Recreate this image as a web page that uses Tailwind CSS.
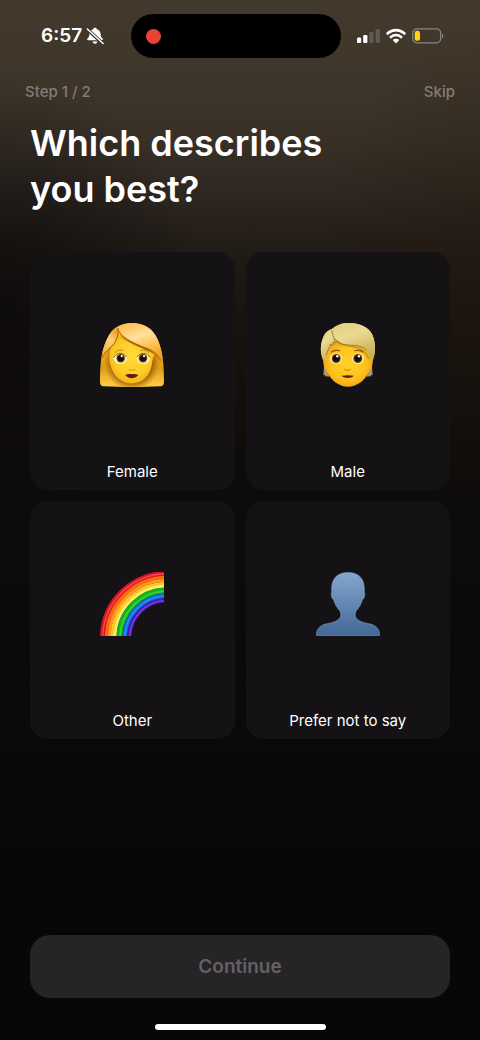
<!DOCTYPE html>
<html lang="en">
<head>
  <meta charset="UTF-8" />
  <meta name="viewport" content="width=device-width, initial-scale=1.0"/>
  <title>Onboarding - Which describes you best?</title>
  <script src="https://cdn.jsdelivr.net/npm/@tailwindcss/browser@4"></script>
</head>
<body class="bg-[#080609] font-['Inter',sans-serif] text-white">
  <div class="flex min-h-screen flex-col bg-[radial-gradient(ellipse_200px_230px_at_0%_300px,#080709a6,#08070900),radial-gradient(ellipse_160px_240px_at_100%_270px,#24180c70,#24180c00),linear-gradient(to_bottom,#43392c_0px,#3e352a_90px,#383026_140px,#2e2721_195px,#221c17_245px,#17130e_320px,#0e0c0a_460px,#0b0a0a_700px,#080609_850px)]">

    <!-- Status bar -->
    <div class="flex h-[58px] items-center pt-[14px] pr-9 pl-[41px]">
      <div class="flex w-[90px] shrink-0 items-center gap-1">
        <span class="text-[19px] leading-6 font-semibold">6:57</span>
        <svg class="size-[18px]" viewBox="0 0 18 18" aria-hidden="true">
          <path fill="#fff" d="M9 .8c1 0 1.700.6 1.800 1.400 2.500.7 3.700 2.500 3.800 4.800.1 2.600.8 3.500 2 4.600.6.600.3 1.600-.7 1.600H2.100c-1 0-1.300-1-.7-1.600 1.200-1.100 1.900-2 2-4.600.1-2.300 1.300-4.100 3.800-4.800C7.300 1.400 8 .8 9 .8zM6.600 14.500h4.800c-.2 1.300-1.100 2.200-2.400 2.200s-2.200-.9-2.400-2.200z"/>
          <path d="M1 2l15.800 14.500" stroke="#3f362a" stroke-width="3.400"/>
          <path d="M1.300 2l15.800 14.500" stroke="#fff" stroke-width="1.400" stroke-linecap="round"/>
        </svg>
      </div>
      <div class="flex h-11 flex-1 items-center rounded-full bg-black pl-[15px]">
        <span class="size-[15px] rounded-full bg-[#e94335]"></span>
      </div>
      <div class="ml-4 flex items-center gap-[6px]">
        <svg class="h-4 w-[23px]" viewBox="0 0 23 16" aria-hidden="true">
          <rect x="0" y="9.500" width="4.200" height="5.500" rx="1.200" fill="#fff"/>
          <rect x="6.200" y="7" width="4.200" height="8" rx="1.200" fill="#fff"/>
          <rect x="12.400" y="4" width="4.200" height="11" rx="1.200" fill="#fff" fill-opacity=".18"/>
          <rect x="18.600" y="1" width="4.200" height="14" rx="1.200" fill="#fff" fill-opacity=".18"/>
        </svg>
        <svg class="h-4 w-5" viewBox="0 0 20 16" aria-hidden="true">
          <path d="M1.800 5.300a12 12 0 0 1 16.400 0" fill="none" stroke="#fff" stroke-width="2.700" stroke-linecap="square"/>
          <path d="M5 8.900a7.400 7.400 0 0 1 10 0" fill="none" stroke="#fff" stroke-width="2.600" stroke-linecap="square"/>
          <path fill="#fff" d="M10 15.400L6.700 12.100a4.700 4.700 0 0 1 6.600 0z"/>
        </svg>
        <svg class="h-4 w-8" viewBox="0 0 32 16" aria-hidden="true">
          <rect x=".7" y=".8" width="28" height="14" rx="4.300" fill="none" stroke="#fff" stroke-opacity=".4" stroke-width="1.200"/>
          <rect x="2.700" y="2.800" width="5.300" height="10" rx="2.200" fill="#ffd60a"/>
          <path d="M30.200 5.500c1.400.7 1.400 4 0 4.700z" fill="#fff" fill-opacity=".5"/>
        </svg>
      </div>
    </div>

    <header class="mt-6 flex items-center justify-between px-[25px] text-[15px] leading-5 font-medium text-[#837c76]">
      <span>Step 1 / 2</span>
      <a href="#skip">Skip</a>
    </header>

    <form class="flex flex-1 flex-col px-[30px] pt-[18px]">
      <h1 id="question" class="text-4xl leading-[46px] font-semibold">Which describes<br/>you best?</h1>

      <div role="radiogroup" aria-labelledby="question" class="mt-10 grid grid-cols-2 gap-[11px]">
        <label class="relative flex h-[238px] flex-col items-center gap-1 rounded-[18px] bg-[#141215] pb-2 has-checked:ring-2 has-checked:ring-white">
          <input type="radio" name="gender" value="female" class="sr-only"/>
          <span class="flex flex-1 items-center">
            <svg class="size-16" viewBox="0 0 64 64" aria-hidden="true">
              <defs>
                <linearGradient id="hairF" x1="0" y1="0" x2="0" y2="1">
                  <stop offset="0" stop-color="#ffc65c"/><stop offset=".4" stop-color="#f0a322"/><stop offset=".7" stop-color="#dd9d16"/><stop offset="1" stop-color="#ffd044"/>
                </linearGradient>
                <radialGradient id="faceF" cx=".5" cy=".45" r=".62">
                  <stop offset="0" stop-color="#ffdc3b"/><stop offset=".65" stop-color="#fdca25"/><stop offset="1" stop-color="#eca813"/>
                </radialGradient>
                <radialGradient id="shadeF" cx=".5" cy=".5" r=".5">
                  <stop offset=".7" stop-color="#965405" stop-opacity=".95"/><stop offset="1" stop-color="#b87408" stop-opacity="0"/>
                </radialGradient>
                <linearGradient id="fringeF" x1=".2" y1="0" x2=".6" y2="1">
                  <stop offset="0" stop-color="#ffbe4b"/><stop offset=".4" stop-color="#ffe0a0"/><stop offset=".7" stop-color="#ffc150"/><stop offset="1" stop-color="#f0a12a"/>
                </linearGradient>
                <linearGradient id="lockF" x1=".7" y1="0" x2=".3" y2="1">
                  <stop offset="0" stop-color="#f0a02a"/><stop offset=".35" stop-color="#ffcf77"/><stop offset="1" stop-color="#f2a422"/>
                </linearGradient>
                <clipPath id="headF">
                  <path d="M0 58C0 43 1 28 7 16 12 5 20 0 32 0s21 5 26 17c5 12 6 26 6 41 0 4-1 5-4 5.300-18 .9-38 .9-56 0C1 63 0 62 0 58z"/>
                </clipPath>
              </defs>
              <g clip-path="url(#headF)">
                <path fill="url(#hairF)" d="M0 0h64v64H0z"/>
                <ellipse cx="32" cy="39" rx="28" ry="29" fill="url(#shadeF)"/>
                <path fill="url(#faceF)" d="M15 12l40 19c-2 3-2.500 6-3 9-1 12-9.500 20.500-20 20.500S13 53 10.500 42C9 38 9 32 10 28z"/>
                <path fill="none" stroke="#b06708" stroke-width="1.600" opacity=".65" d="M18 7c4 8 12 13 21 16.500 9 3.500 17 6 22 14"/>
                <path fill="url(#fringeF)" d="M18 5C23 1 27 0 32 0c11 0 20 5 26 17 3 7 4.500 14 5 20-4-8-12-10.500-20-13.500C32 19 22 14 18 5z"/>
                <path fill="url(#lockF)" d="M18 5c.5 7-1 12-5 17C8 27 3 30 0 39c0-10 3-19 7-25 3-5 6-8 11-9z"/>
                <path fill="none" stroke="#a35a08" stroke-width="1" d="M18 5c.5 7-1 12-5 17-4 4-8 7-11.500 13"/>
              </g>
              <path fill="none" stroke="#b57b16" stroke-width=".9" stroke-linecap="round" d="M15 29.500c2-2.500 5.500-3 8-2M40.500 27.500c3-1 6-.5 8 2"/>
              <ellipse cx="20.200" cy="35.500" rx="6.500" ry="5.200" fill="#fff3c4"/>
              <ellipse cx="43.500" cy="35.500" rx="6.500" ry="5.200" fill="#fff3c4"/>
              <path fill="none" stroke="#684010" stroke-width=".8" d="M13.900 34.500c2-5 9.500-5.800 12.500-.5M37.300 34c3-5.300 10.500-4.500 12.500.5"/>
              <circle cx="20.700" cy="35.200" r="4.200" fill="#583714"/>
              <circle cx="43" cy="35.200" r="4.200" fill="#583714"/>
              <circle cx="20.700" cy="35.200" r="2.900" fill="#140a04"/>
              <circle cx="43" cy="35.200" r="2.900" fill="#140a04"/>
              <circle cx="21.700" cy="33.200" r="1.100" fill="#fff"/>
              <circle cx="44" cy="33.200" r="1.100" fill="#fff"/>
              <path fill="none" stroke="#e09c14" stroke-width="1.200" stroke-linecap="round" d="M29.300 46.500c1.300 1 4.100 1 5.400 0"/>
              <path fill="#621f11" d="M25.200 52c2-.6 4-1.200 5.300-.9.900.2 1.600.2 2.500 0 1.500-.3 3.300.3 5.300.9-2 2.400-4 3.300-6.500 3.300s-4.600-.9-6.600-3.300z"/>
            </svg>
          </span>
          <span class="text-[15px] leading-5">Female</span>
        </label>

        <label class="relative flex h-[238px] flex-col items-center gap-1 rounded-[18px] bg-[#141215] pb-2 has-checked:ring-2 has-checked:ring-white">
          <input type="radio" name="gender" value="male" class="sr-only"/>
          <span class="flex flex-1 items-center">
            <svg class="size-16" viewBox="0 0 64 64" aria-hidden="true">
              <defs>
                <linearGradient id="hairM" x1=".2" y1="0" x2=".6" y2="1">
                  <stop offset="0" stop-color="#e3cf80"/><stop offset=".35" stop-color="#eadb91"/><stop offset=".7" stop-color="#d7bf6e"/><stop offset="1" stop-color="#c4ab5c"/>
                </linearGradient>
                <radialGradient id="faceM" cx=".5" cy=".5" r=".56">
                  <stop offset="0" stop-color="#ffd32a"/><stop offset=".65" stop-color="#fec11c"/><stop offset="1" stop-color="#f0a00c"/>
                </radialGradient>
              </defs>
              <path fill="#a79b69" d="M8 42l4 2 1 10-2-1-1 1-1-2-1.500.5zM56 42l-4 2-1 10 2-1 1 1 1-2 1.500.5z"/>
              <path fill="url(#hairM)" d="M8 39C4 32 4 22 7 15c2-6 6-8 9-9C22 1 27 0 33 0c11 0 19 4 23 11 4 8 4 20 0 28z"/>
              <path fill="url(#faceM)" d="M14 18c12-2 30-1 38 6l3.500 11c1.500 1 1.500 5 .5 8-.8 2.500-1.500 3.500-2.500 4.500C50 57 41 63.700 32 63.700S14 57 10.500 47.500C9.500 46.500 9 45.500 8 43c-1-3-1-6 .5-8z"/>
              <path fill="none" stroke="#b08523" stroke-width="1.300" opacity=".7" d="M17 15c5 7 13 8 22 9 6 1 11 5 14 12"/>
              <path fill="url(#hairM)" d="M16 6C22 1 27 0 33 0c11 0 19 4 23 11 4 8 4 20 0 28-1-4-3-8-5-11.500C48 24 44 23 39 22.500 29 22 18 20 16 6z"/>
              <path fill="url(#hairM)" d="M16 6c0 6 1 11 4 14l-3-1v3.500L14.500 21C13 27 10 31 8.500 38 4 32 4 22 7 15c2-6 6-8 9-9z"/>
              <path fill="none" stroke="#927831" stroke-width=".9" d="M15.800 7c.7 8 5 13 12 14.500 4 .8 7 .7 11 1 5 .5 9 1.500 12 5M20 20l-3-1v3.500L14.500 21c-1 4-3 7-4.500 11"/>
              <path fill="none" stroke="#8d601c" stroke-width="1.300" stroke-linecap="round" d="M15.500 29c2-1.700 5.500-2 8-1.300M39 27.700c2.500-.7 6-.4 8 1.300"/>
              <ellipse cx="20" cy="35.500" rx="6" ry="5.200" fill="#fff3c4"/>
              <ellipse cx="42" cy="35.500" rx="6" ry="5.200" fill="#fff3c4"/>
              <circle cx="20.200" cy="35.500" r="4.500" fill="#60380f"/>
              <circle cx="41.800" cy="35.500" r="4.500" fill="#60380f"/>
              <circle cx="20.200" cy="35.500" r="3" fill="#140a04"/>
              <circle cx="41.800" cy="35.500" r="3" fill="#140a04"/>
              <circle cx="21.300" cy="33.300" r="1.200" fill="#fff"/>
              <circle cx="42.900" cy="33.300" r="1.200" fill="#fff"/>
              <path fill="none" stroke="#dc8e08" stroke-width="1.300" stroke-linecap="round" d="M28.800 46.500c1.300 1.200 4.100 1.200 5.400 0"/>
              <path fill="#5c230b" d="M25.500 52.800c4-.7 8.500-.7 12.500 0-1.800 1.700-3.800 2.200-6.300 2.200s-4.500-.5-6.200-2.200z"/>
            </svg>
          </span>
          <span class="text-[15px] leading-5">Male</span>
        </label>

        <label class="relative flex h-[238px] flex-col items-center gap-1 rounded-[18px] bg-[#141215] pb-2 has-checked:ring-2 has-checked:ring-white">
          <input type="radio" name="gender" value="other" class="sr-only"/>
          <span class="flex flex-1 items-center">
            <svg class="size-16" viewBox="0 0 64 64" aria-hidden="true">
              <g fill="none">
                <circle cx="67" cy="66" r="64.500" stroke="#df1422" stroke-width="5"/>
                <circle cx="67" cy="66" r="64.200" stroke="#f45060" stroke-width="1.200"/>
                <circle cx="67" cy="66" r="59.500" stroke="#fb6a0c" stroke-width="5.400"/>
                <circle cx="67" cy="66" r="57.500" stroke="#ff9a22" stroke-width="2.500"/>
                <circle cx="67" cy="66" r="53.500" stroke="#ffc52b" stroke-width="5.800"/>
                <circle cx="67" cy="66" r="52" stroke="#ffec66" stroke-width="2.800"/>
                <circle cx="67" cy="66" r="47.500" stroke="#0eb51f" stroke-width="6"/>
                <circle cx="67" cy="66" r="47" stroke="#3fd033" stroke-width="1.800"/>
                <circle cx="67" cy="66" r="42.200" stroke="#0d66df" stroke-width="5"/>
                <circle cx="67" cy="66" r="42.200" stroke="#2a8fee" stroke-width="1.600"/>
                <circle cx="67" cy="66" r="37.700" stroke="#4a16b4" stroke-width="4.200"/>
                <circle cx="67" cy="66" r="37.400" stroke="#7c48e4" stroke-width="1.300"/>
              </g>
            </svg>
          </span>
          <span class="text-[15px] leading-5">Other</span>
        </label>

        <label class="relative flex h-[238px] flex-col items-center gap-1 rounded-[18px] bg-[#141215] pb-2 has-checked:ring-2 has-checked:ring-white">
          <input type="radio" name="gender" value="none" class="sr-only"/>
          <span class="flex flex-1 items-center">
            <svg class="size-16" viewBox="0 0 64 64" aria-hidden="true">
              <defs>
                <linearGradient id="bust" x1="0" y1="0" x2="0" y2="1">
                  <stop offset="0" stop-color="#83a8cf"/><stop offset=".5" stop-color="#6288b3"/><stop offset="1" stop-color="#446897"/>
                </linearGradient>
              </defs>
              <path fill="url(#bust)" stroke="#7fa6cc" stroke-width=".5" d="M.4 63.700C0 58 3 54.500 8 52.500c5-1.500 9-1.500 13-4 4-2.500 4.500-5.500 3-9.500-3-3-5-6.500-6.300-11-2-1-3.300-6-2-8C14.500 7 21 .4 32 .4S49.500 7 48.300 20c1.300 2 0 7-2 8-1.300 4.500-3.300 8-6.300 11-1.500 4-1 7 3 9.500 4 2.500 8 2.500 13 4 5 2 8 5.500 7.600 11.200z"/>
            </svg>
          </span>
          <span class="text-[15px] leading-5">Prefer not to say</span>
        </label>
      </div>

      <button type="submit" disabled class="mt-auto h-[63px] rounded-[20px] bg-[#262427] pt-[2px] text-[19px] font-semibold text-[#636164]">Continue</button>
    </form>

    <!-- Home indicator -->
    <div class="mx-auto mt-[26px] mb-[10px] h-[6px] w-[171px] rounded-full bg-white"></div>
  </div>

  <script>
    const form = document.querySelector("form");
    const button = form.querySelector("button");

    form.addEventListener("change", () => {
      button.disabled = false;
    });

    form.addEventListener("submit", (e) => {
      e.preventDefault();
    });
  </script>
</body>
</html>
